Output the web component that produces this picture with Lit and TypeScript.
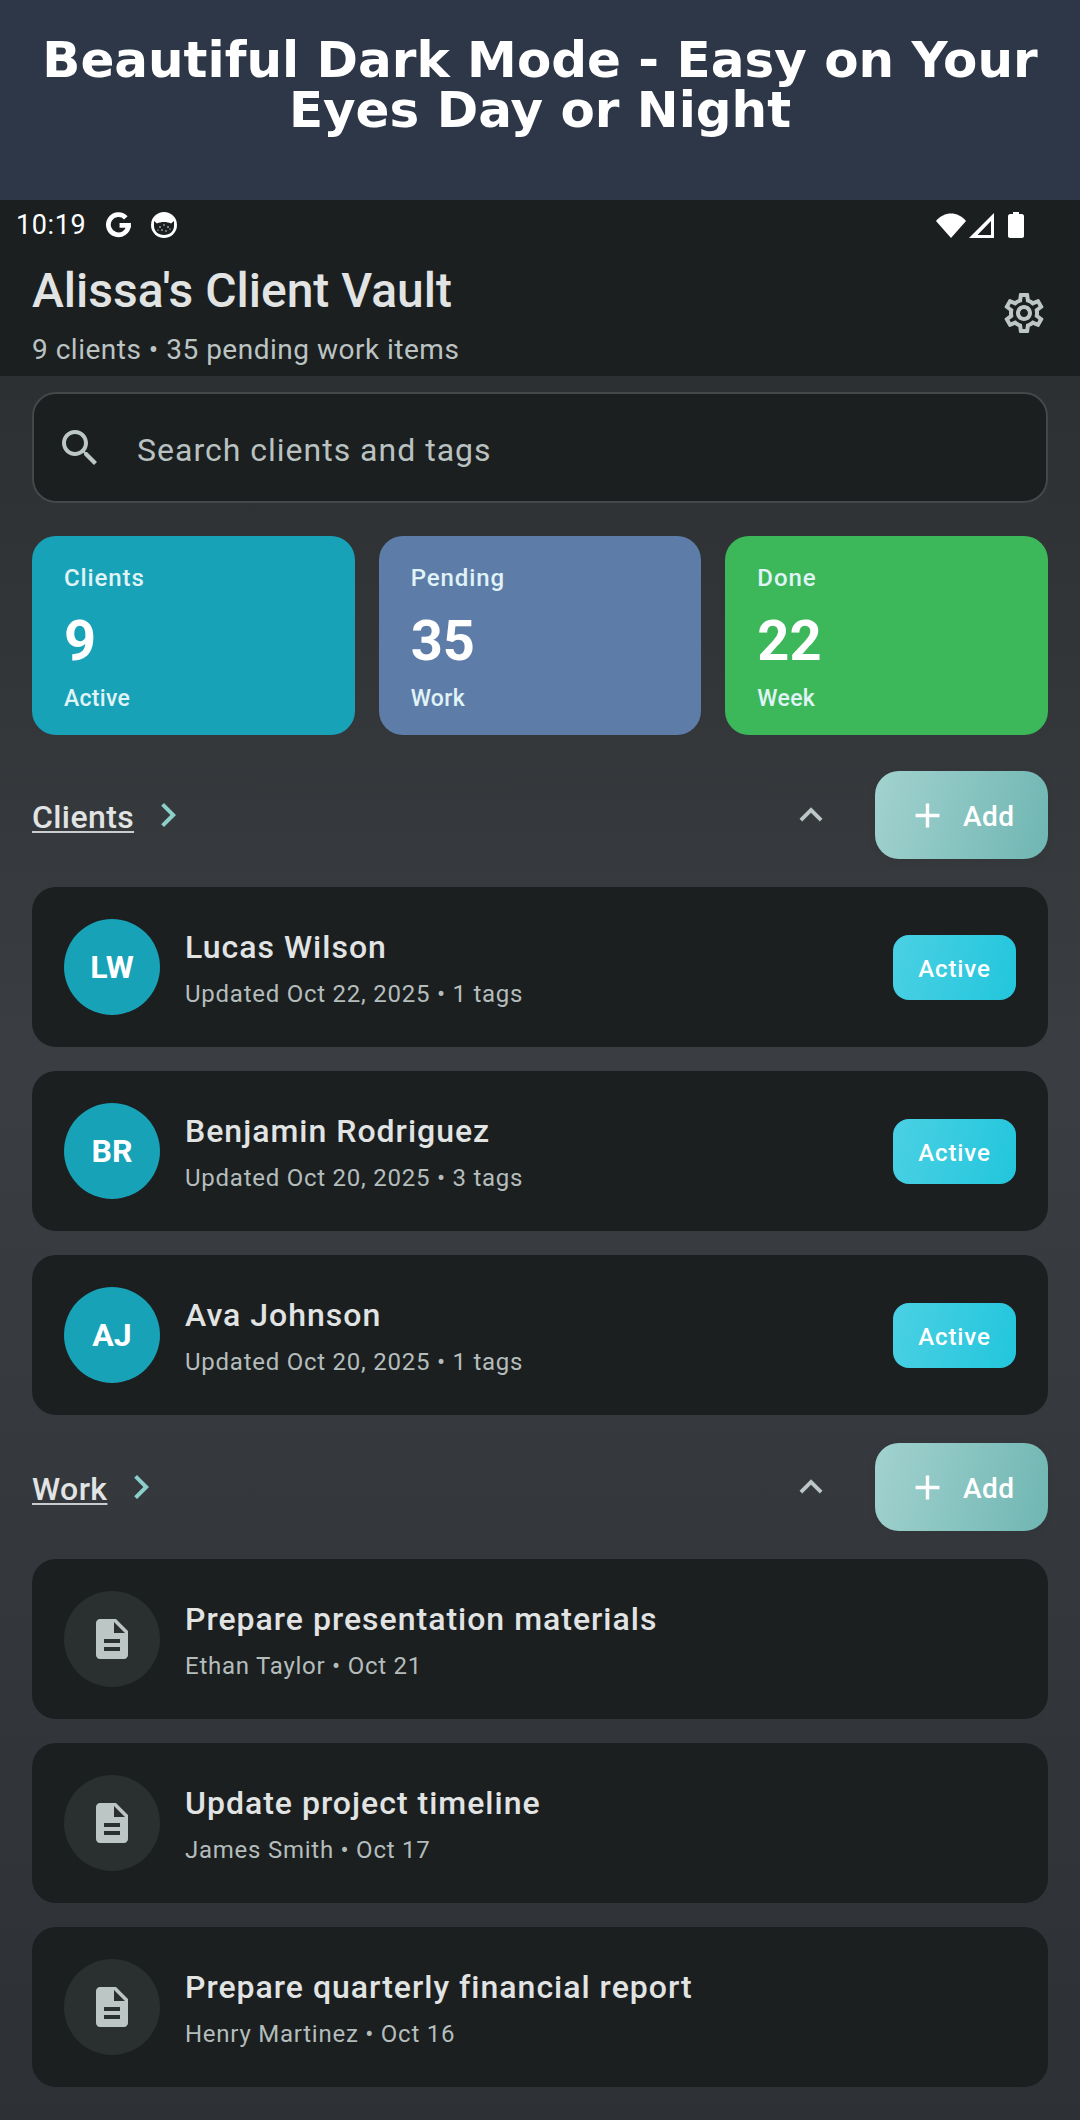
import { LitElement, html, css, svg } from "lit";
import { customElement } from "lit/decorators.js";

const clients = [
  { initials: "LW", name: "Lucas Wilson", meta: "Updated Oct 22, 2025 • 1 tags" },
  { initials: "BR", name: "Benjamin Rodriguez", meta: "Updated Oct 20, 2025 • 3 tags" },
  { initials: "AJ", name: "Ava Johnson", meta: "Updated Oct 20, 2025 • 1 tags" },
];

const work = [
  { name: "Prepare presentation materials", meta: "Ethan Taylor • Oct 21" },
  { name: "Update project timeline", meta: "James Smith • Oct 17" },
  { name: "Prepare quarterly financial report", meta: "Henry Martinez • Oct 16" },
];

const stats = [
  { label: "Clients", value: "9", sub: "Active", cls: "teal" },
  { label: "Pending", value: "35", sub: "Work", cls: "blue" },
  { label: "Done", value: "22", sub: "Week", cls: "green" },
];

const plusIcon = svg`<path d="M19 13h-6v6h-2v-6H5v-2h6V5h2v6h6v2z"/>`;
const chevronUp = svg`<path d="M12 8l-6 6 1.41 1.41L12 10.83l4.59 4.58L18 14z"/>`;
const chevronRight = svg`<path d="M10 6L8.59 7.41 13.17 12l-4.58 4.59L10 18l6-6z"/>`;
const searchIcon = svg`<path d="M15.5 14h-.79l-.28-.27C15.41 12.59 16 11.11 16 9.5 16 5.91 13.09 3 9.5 3S3 5.91 3 9.5 5.91 16 9.5 16c1.61 0 3.09-.59 4.23-1.57l.27.28v.79l5 4.99L20.49 19l-4.99-5zm-6 0C7.01 14 5 11.99 5 9.5S7.01 5 9.5 5 14 7.01 14 9.5 11.99 14 9.5 14z"/>`;
const docIcon = svg`<path d="M14 2H6c-1.1 0-2 .9-2 2v16c0 1.1.9 2 2 2h12c1.1 0 2-.9 2-2V8l-6-6zm2 16H8v-2h8v2zm0-4H8v-2h8v2zm-3-5V3.5L18.5 9H13z"/>`;
const gearIcon = svg`<path d="M19.43 12.98c.04-.32.07-.64.07-.98s-.03-.66-.07-.98l2.11-1.65c.19-.15.24-.42.12-.64l-2-3.46c-.12-.22-.39-.3-.61-.22l-2.49 1c-.52-.4-1.08-.73-1.69-.98l-.38-2.65C14.46 2.18 14.25 2 14 2h-4c-.25 0-.46.18-.49.42l-.38 2.65c-.61.25-1.17.59-1.69.98l-2.49-1c-.23-.09-.49 0-.61.22l-2 3.46c-.13.22-.07.49.12.64l2.11 1.65c-.04.32-.07.65-.07.98s.03.66.07.98l-2.11 1.65c-.19.15-.24.42-.12.64l2 3.46c.12.22.39.3.61.22l2.49-1c.52.4 1.08.73 1.69.98l.38 2.65c.03.24.24.42.49.42h4c.25 0 .46-.18.49-.42l.38-2.65c.61-.25 1.17-.59 1.69-.98l2.49 1c.23.09.49 0 .61-.22l2-3.46c.12-.22.07-.49-.12-.64l-2.11-1.65zM17.45 11.27c.04.31.05.52.05.73 0 .21-.02.43-.05.73l-.14 1.13.89.7 1.08.84-.7 1.21-1.27-.51-1.04-.42-.9.68c-.43.32-.84.56-1.25.73l-1.06.43-.16 1.13-.2 1.35h-1.4l-.19-1.35-.16-1.13-1.06-.43c-.43-.18-.83-.41-1.23-.71l-.91-.7-1.06.43-1.27.51-.7-1.21 1.08-.84.89-.7-.14-1.13c-.03-.31-.05-.54-.05-.74s.02-.43.05-.73l.14-1.13-.89-.7-1.08-.84.7-1.21 1.27.51 1.04.42.9-.68c.43-.32.84-.56 1.25-.73l1.06-.43.16-1.13.2-1.35h1.39l.19 1.35.16 1.13 1.06.43c.43.18.83.41 1.23.71l.91.7 1.06-.43 1.27-.51.7 1.21-1.07.85-.89.7.14 1.13zM12 8c-2.21 0-4 1.79-4 4s1.79 4 4 4 4-1.79 4-4-1.79-4-4-4zm0 6c-1.1 0-2-.9-2-2s.9-2 2-2 2 .9 2 2-.9 2-2 2z"/>`;

@customElement("app-root")
export class AppRoot extends LitElement {
  static styles = css`
    :host {
      display: block;
      width: 1080px;
      height: 2120px;
      overflow: hidden;
      font-family: Roboto, sans-serif;
      background: linear-gradient(180deg, #2c3032 376px, #3a3e42 1060px, #2d3135 2120px);
    }
    .banner {
      height: 200px;
      background: #2d3748;
      box-sizing: border-box;
      padding-top: 35px;
      text-align: center;
      color: #fff;
      font: bold 50px/50px "DejaVu Sans", sans-serif;
    }
    .appbar {
      height: 176px;
      background: #1b1f20;
      box-sizing: border-box;
    }
    .status {
      height: 50px;
      display: flex;
      align-items: center;
      padding: 0 16px;
      color: #fff;
      font-size: 27px;
      letter-spacing: 0.6px;
    }
    .status .g {
      margin-left: 20px;
    }
    .status .cat {
      margin-left: 19px;
    }
    .status .right {
      margin-left: auto;
      margin-right: 40px;
      display: flex;
      align-items: center;
      gap: 3px;
    }
    .status .battery {
      margin-left: 11px;
    }
    .titlebar {
      display: flex;
      align-items: center;
      justify-content: space-between;
      padding: 0 32px;
    }
    .title {
      margin-top: 16px;
      font-size: 48px;
      line-height: 50px;
      font-weight: 500;
      color: #e2e4e4;
    }
    .subtitle {
      margin-top: 17px;
      font-size: 28px;
      line-height: 34px;
      letter-spacing: 0.5px;
      color: #bcc4c3;
    }
    .gear {
      width: 48px;
      height: 48px;
      fill: #bcc6c5;
      margin-top: 8px;
    }
    .content {
      padding: 16px 32px 0;
    }
    .search {
      height: 111px;
      box-sizing: border-box;
      display: flex;
      align-items: center;
      background: #1b1f20;
      border: 2px solid #45484a;
      border-radius: 24px;
      padding-left: 22px;
      color: #b9c2c1;
      font-size: 32px;
      letter-spacing: 1px;
    }
    .search svg {
      width: 48px;
      height: 48px;
      fill: #bcc6c5;
      margin-right: 33px;
    }
    .search span {
      padding-top: 5px;
    }
    .stats {
      margin-top: 33px;
      display: grid;
      grid-template-columns: repeat(3, 1fr);
      gap: 24px;
    }
    .stat {
      height: 199px;
      box-sizing: border-box;
      border-radius: 24px;
      padding: 27px 32px 0;
      color: #fff;
    }
    .stat.teal {
      background: #17a2b8;
    }
    .stat.blue {
      background: #5d7da8;
    }
    .stat.green {
      background: #3cb85a;
    }
    .stat-label,
    .stat-sub {
      line-height: 30px;
      font-weight: 500;
      color: #e0f3f6;
    }
    .stat-label {
      font-size: 24px;
      letter-spacing: 0.9px;
    }
    .stat-sub {
      margin-top: 11px;
      font-size: 23px;
      letter-spacing: 0.3px;
    }
    .stat-value {
      margin-top: 16px;
      font-size: 56px;
      line-height: 64px;
      font-weight: 700;
    }
    .section-head {
      height: 88px;
      display: flex;
      align-items: center;
    }
    .section-head.first {
      margin: 36px 0 28px;
    }
    .section-head.second {
      margin: 28px 0 28px;
    }
    .section-title {
      padding-top: 3px;
      font-size: 32px;
      font-weight: 500;
      letter-spacing: 0.4px;
      color: #e2e4e4;
      text-decoration: underline 2px #c9cdcd;
      text-underline-offset: 3px;
    }
    .arrow {
      width: 48px;
      height: 48px;
      fill: #8ccfca;
      margin-left: 10px;
    }
    .collapse {
      width: 46px;
      height: 46px;
      fill: #bcc6c5;
      margin-left: auto;
      margin-right: 41px;
    }
    .add {
      width: 173px;
      height: 88px;
      box-sizing: border-box;
      display: flex;
      align-items: center;
      padding-left: 32px;
      gap: 15px;
      border-radius: 24px;
      background: linear-gradient(105deg, #a2d2cf, #6fb6b2);
      box-shadow: 0 2px 10px rgba(0, 0, 0, 0.06);
      color: #fff;
      font-size: 28px;
      font-weight: 500;
      letter-spacing: 0.5px;
    }
    .add span {
      padding-top: 2px;
    }
    .add svg {
      width: 41px;
      height: 41px;
      fill: #fff;
    }
    .list {
      display: flex;
      flex-direction: column;
      gap: 24px;
    }
    .card {
      height: 160px;
      box-sizing: border-box;
      display: flex;
      align-items: center;
      background: #1b1f20;
      border-radius: 24px;
      padding: 0 32px;
    }
    .avatar {
      width: 96px;
      height: 96px;
      flex: none;
      border-radius: 50%;
      display: flex;
      align-items: center;
      justify-content: center;
      background: #17a2b8;
      color: #fff;
      font-size: 32px;
      font-weight: 700;
    }
    .avatar.doc {
      background: #2a2f30;
    }
    .avatar.doc svg {
      width: 48px;
      height: 48px;
      fill: #bcc6c5;
    }
    .info {
      margin-left: 25px;
      padding-top: 2px;
      flex: 1;
    }
    .name {
      font-size: 32px;
      line-height: 40px;
      font-weight: 500;
      letter-spacing: 1px;
      color: #e2e4e4;
    }
    .meta {
      margin-top: 11px;
      font-size: 24px;
      line-height: 32px;
      letter-spacing: 0.75px;
      color: #b4bdbc;
    }
    .badge {
      width: 123px;
      height: 65px;
      box-sizing: border-box;
      padding-top: 3px;
      border-radius: 16px;
      display: flex;
      align-items: center;
      justify-content: center;
      background: linear-gradient(105deg, #4bd0e4, #22c6dc);
      color: #fff;
      font-size: 24px;
      font-weight: 500;
      letter-spacing: 0.9px;
    }
  `;

  private icon(path: unknown, cls: string) {
    return html`<svg class=${cls} viewBox="0 0 24 24">${path}</svg>`;
  }

  private sectionHead(title: string, cls: string) {
    return html`<div class="section-head ${cls}">
      <span class="section-title">${title}</span>
      ${this.icon(chevronRight, "arrow")}
      ${this.icon(chevronUp, "collapse")}
      <div class="add">${this.icon(plusIcon, "")}<span>Add</span></div>
    </div>`;
  }

  render() {
    return html`
      <div class="banner">Beautiful Dark Mode - Easy on Your<br />Eyes Day or Night</div>
      <div class="appbar">
        <div class="status">
          <span>10:19</span>
          <svg class="g" width="26" height="26" viewBox="0 0 24 24" fill="none" stroke="#fff" stroke-width="4.4">
            <path d="M23 12.400H12.500M20.800 12.400A9.300 9.300 0 1 1 18.300 5.400" />
          </svg>
          <svg class="cat" width="26" height="26" viewBox="0 0 26 26">
            <circle cx="13" cy="13" r="13" fill="#fff" />
            <path d="M3 9l3 2.500c4-2 10-2 14 0L23 9v5c0 5-4 9-10 9S3 19 3 14z" fill="#1b1f20" />
            <g fill="#fff">
              <circle cx="9" cy="15" r="0.800" />
              <circle cx="13" cy="13" r="0.700" />
              <circle cx="17" cy="15" r="0.800" />
              <circle cx="11" cy="18" r="0.700" />
              <circle cx="15" cy="19" r="0.700" />
              <circle cx="19" cy="17" r="0.600" />
              <circle cx="7" cy="18" r="0.600" />
            </g>
          </svg>
          <div class="right">
            <svg width="30" height="25" viewBox="0 0 30 25"><path d="M0 8C8-2 22-2 30 8L15 25z" fill="#fff" /></svg>
            <svg width="25" height="25" viewBox="0 0 25 25">
              <path fill-rule="evenodd" d="M25 0v25H0zM22 8L8.500 22H22z" fill="#fff" />
            </svg>
            <svg class="battery" width="16" height="26" viewBox="0 0 16 26">
              <path d="M5 0h6v2h3c1 0 2 1 2 2v20c0 1-1 2-2 2H2c-1 0-2-1-2-2V4c0-1 1-2 2-2h3z" fill="#fff" />
            </svg>
          </div>
        </div>
        <div class="titlebar">
          <div>
            <div class="title">Alissa's Client Vault</div>
            <div class="subtitle">9 clients • 35 pending work items</div>
          </div>
          ${this.icon(gearIcon, "gear")}
        </div>
      </div>
      <div class="content">
        <div class="search">${this.icon(searchIcon, "")}<span>Search clients and tags</span></div>
        <div class="stats">
          ${stats.map(
            (s) => html`<div class="stat ${s.cls}">
              <div class="stat-label">${s.label}</div>
              <div class="stat-value">${s.value}</div>
              <div class="stat-sub">${s.sub}</div>
            </div>`
          )}
        </div>
        ${this.sectionHead("Clients", "first")}
        <div class="list">
          ${clients.map(
            (c) => html`<div class="card">
              <div class="avatar">${c.initials}</div>
              <div class="info">
                <div class="name">${c.name}</div>
                <div class="meta">${c.meta}</div>
              </div>
              <div class="badge">Active</div>
            </div>`
          )}
        </div>
        ${this.sectionHead("Work", "second")}
        <div class="list">
          ${work.map(
            (w) => html`<div class="card">
              <div class="avatar doc">${this.icon(docIcon, "")}</div>
              <div class="info">
                <div class="name">${w.name}</div>
                <div class="meta">${w.meta}</div>
              </div>
            </div>`
          )}
        </div>
      </div>
    `;
  }
}
